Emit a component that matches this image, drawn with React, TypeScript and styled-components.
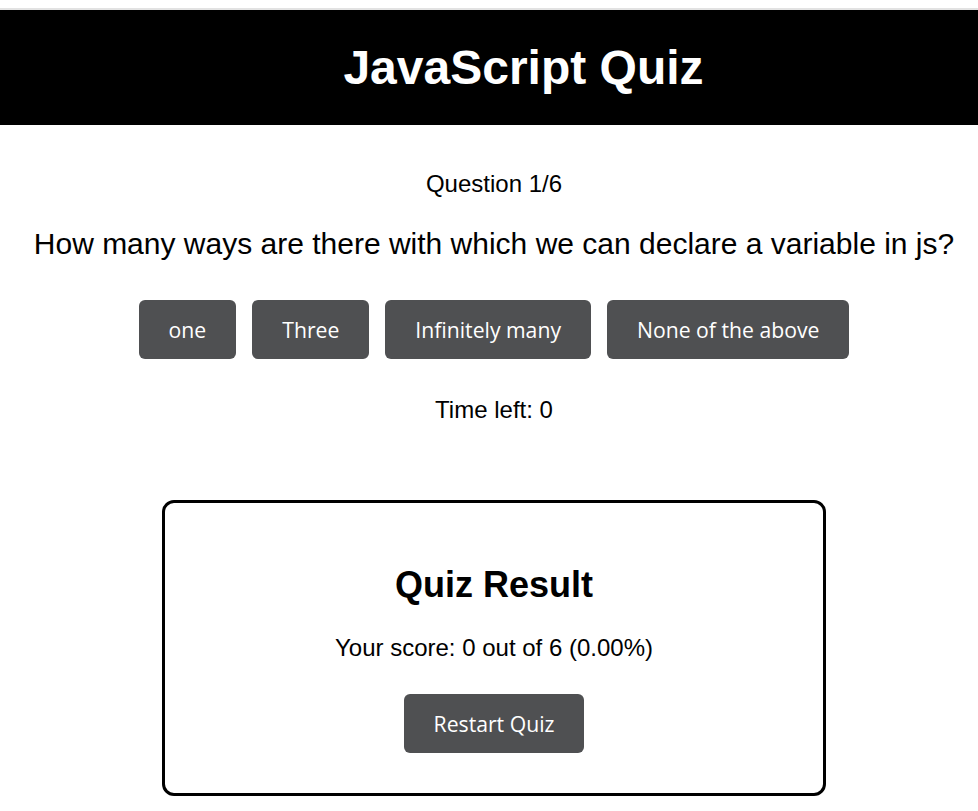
import React from "react";
import styled, { createGlobalStyle } from "styled-components";

const GlobalStyle = createGlobalStyle`
  html, body {
    margin: 0;
    padding: 0;
    background: #ffffff;
  }
  body {
    font-family: "Liberation Sans", Arial, sans-serif;
    color: #000;
  }
`;

const Page = styled.div`
  padding-top: 8px;
`;

const Header = styled.header`
  background: #000;
  border-top: 2px solid #e2e2e2;
  padding: 30px 0 30px 69px;
  display: flex;
  justify-content: center;
`;

const Title = styled.h1`
  margin: 0;
  font-family: "Liberation Sans", Arial, sans-serif;
  font-weight: 700;
  font-size: 48px;
  line-height: 55px;
  color: #fff;
`;

const Main = styled.main`
  padding-left: 10px;
  display: flex;
  flex-direction: column;
  align-items: center;
`;

const Counter = styled.p`
  margin: 45px 0 0;
  font-size: 24px;
  line-height: 28px;
`;

const QuestionText = styled.h2`
  margin: 29px 0 0;
  font-weight: 400;
  font-size: 30px;
  line-height: 34px;
  white-space: nowrap;
`;

const Options = styled.div`
  margin-top: 39px;
  display: flex;
  gap: 16px;
`;

const Button = styled.button`
  font-family: "Open Sans", "Noto Sans", sans-serif;
  font-size: 21.2px;
  line-height: 31px;
  height: 59px;
  padding: 0 30px;
  border: none;
  border-radius: 6px;
  background: #4f5052;
  color: #fff;
  cursor: pointer;
`;

const Timer = styled.p`
  margin: 37px 0 0;
  font-size: 24px;
  line-height: 28px;
`;

const ResultCard = styled.section`
  margin: 76px 0 16px;
  width: 664px;
  box-sizing: border-box;
  border: 3px solid #000;
  border-radius: 12px;
  padding: 61px 0 40px;
  display: flex;
  flex-direction: column;
  align-items: center;
`;

const ResultTitle = styled.h2`
  margin: 0;
  font-weight: 700;
  font-size: 36px;
  line-height: 41px;
`;

const Score = styled.p`
  margin: 29px 0 32px;
  font-size: 24px;
  line-height: 28px;
`;

const options = ["one", "Three", "Infinitely many", "None of the above"];

export default function App() {
  return (
    <Page>
      <GlobalStyle />
      <Header>
        <Title>JavaScript Quiz</Title>
      </Header>
      <Main>
        <Counter>Question 1/6</Counter>
        <QuestionText>
          How many ways are there with which we can declare a variable in js?
        </QuestionText>
        <Options>
          {options.map((o) => (
            <Button key={o}>{o}</Button>
          ))}
        </Options>
        <Timer>Time left: 0</Timer>
        <ResultCard>
          <ResultTitle>Quiz Result</ResultTitle>
          <Score>Your score: 0 out of 6 (0.00%)</Score>
          <Button>Restart Quiz</Button>
        </ResultCard>
      </Main>
    </Page>
  );
}
